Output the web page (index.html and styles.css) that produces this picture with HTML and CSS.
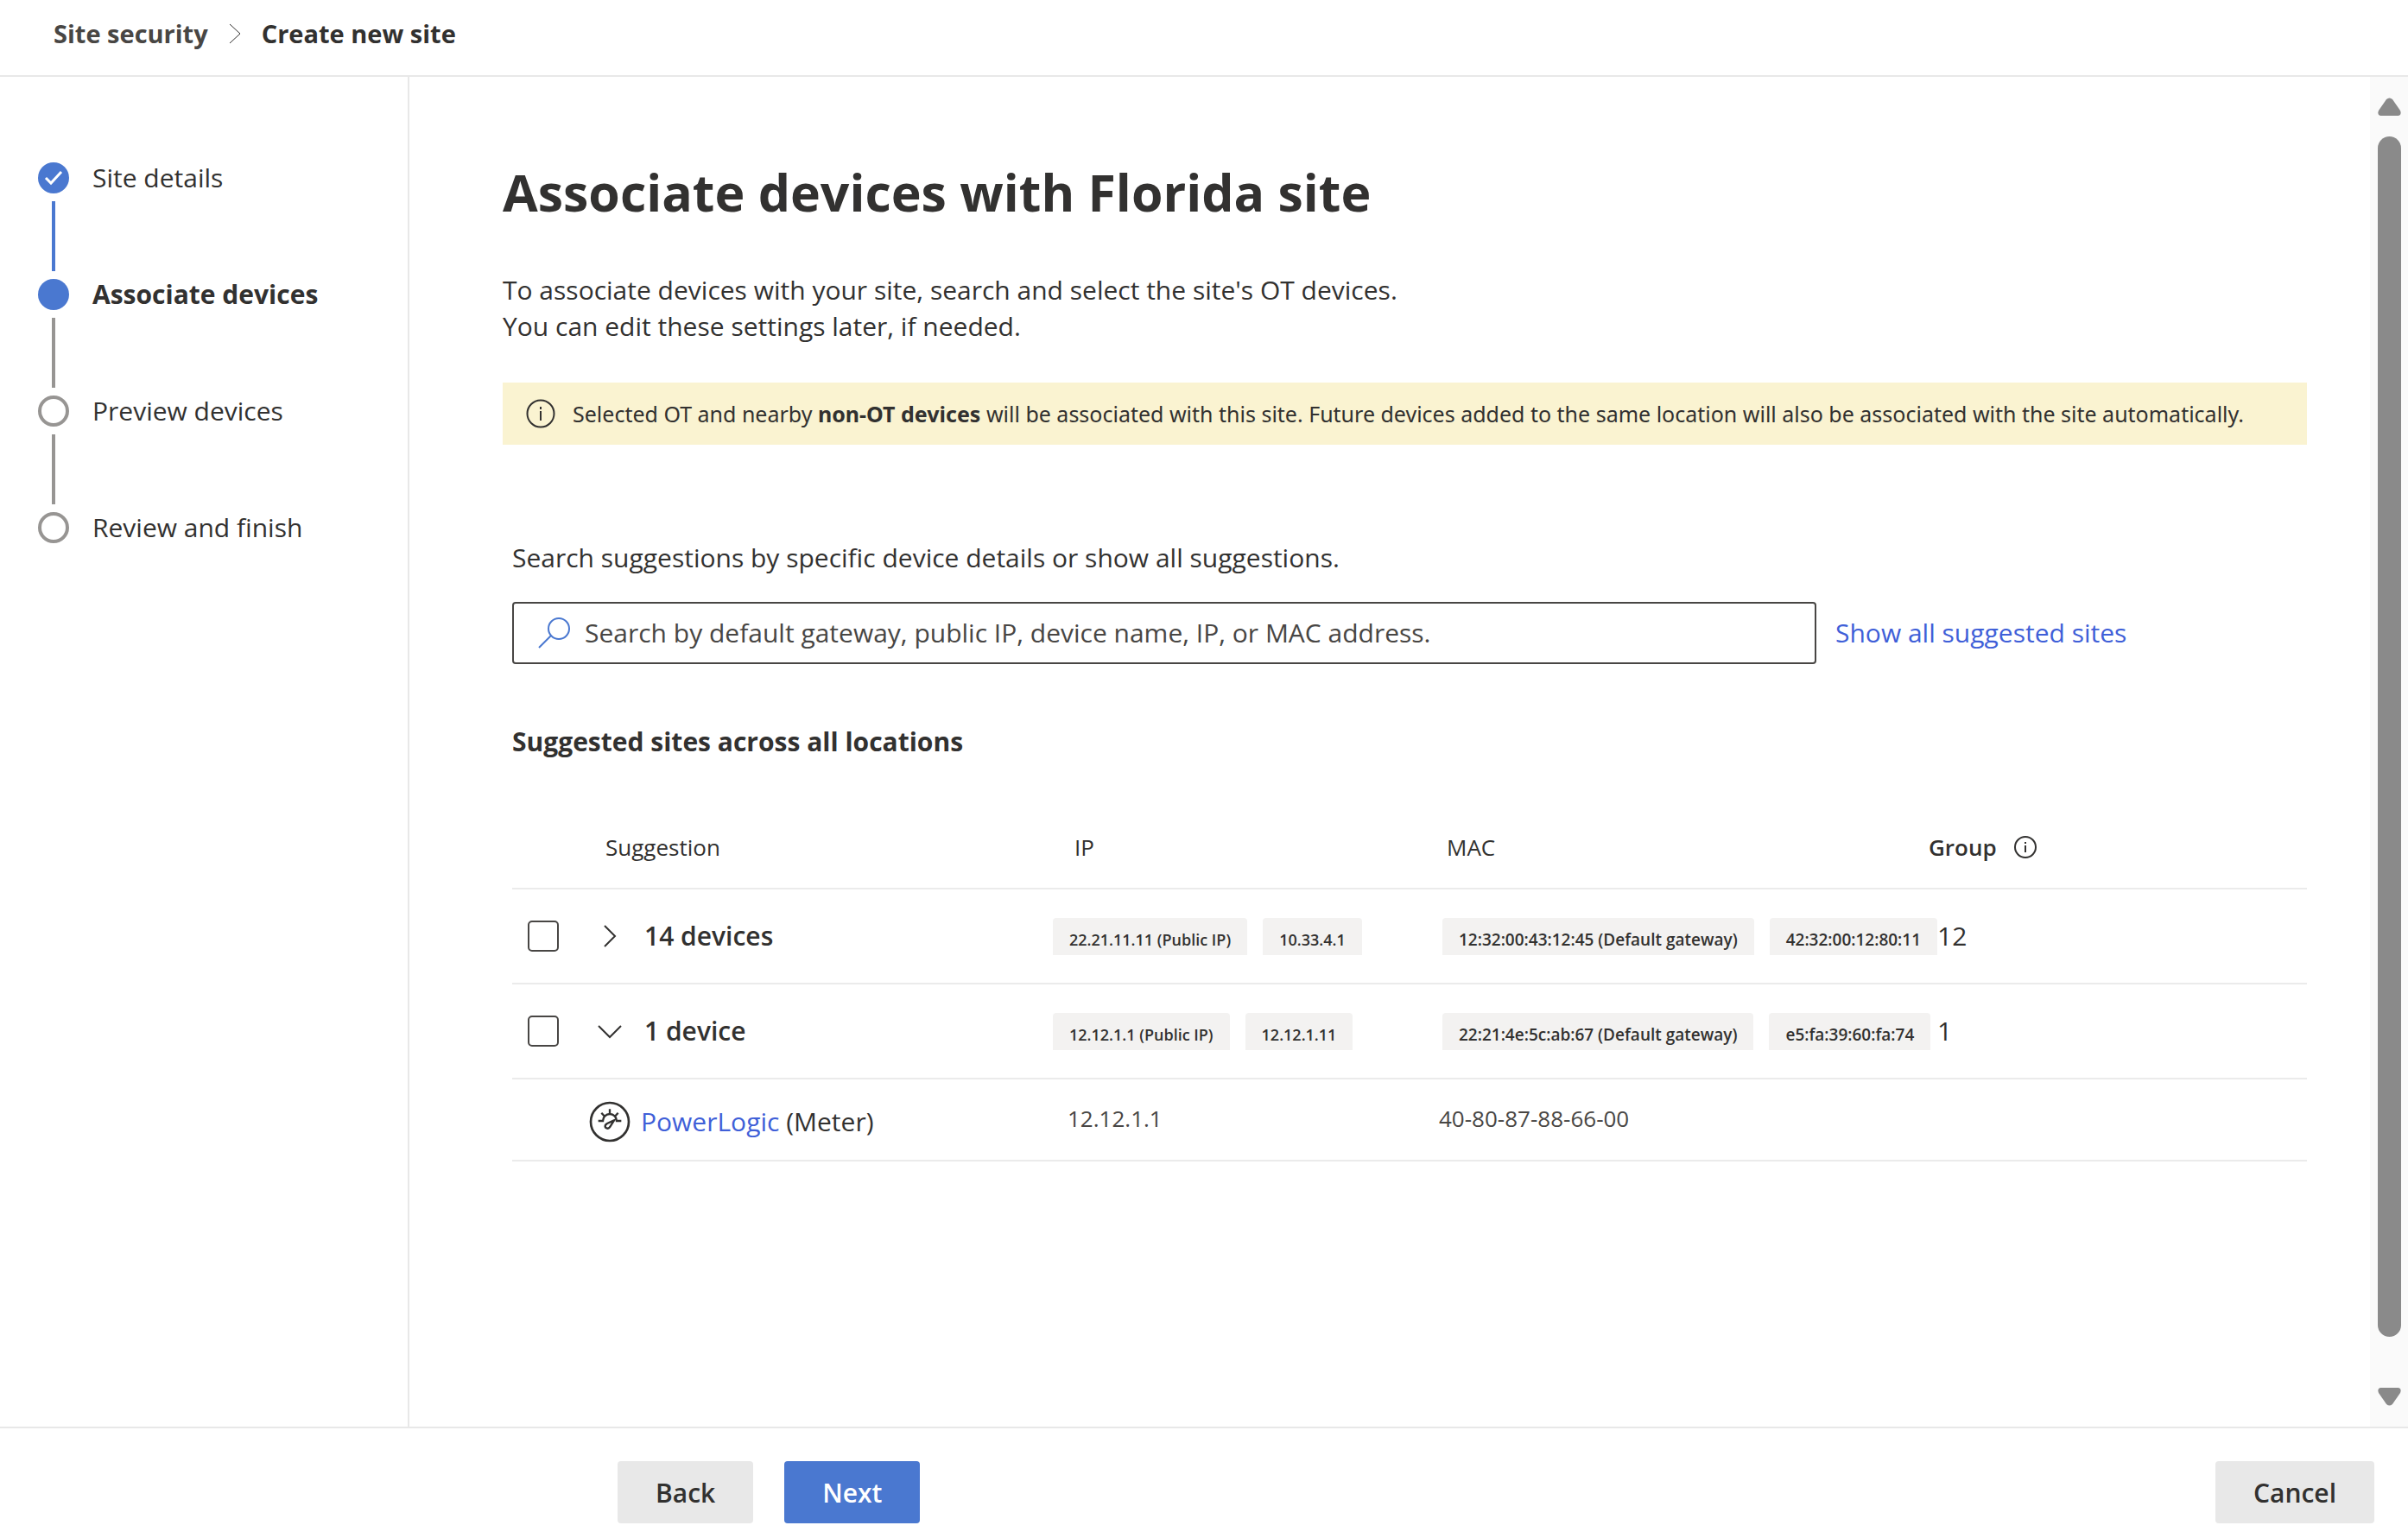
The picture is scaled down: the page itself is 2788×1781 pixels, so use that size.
FILE: index.html
```html
<!DOCTYPE html>
<html lang="en">
<head>
<meta charset="utf-8">
<meta name="viewport" content="width=device-width, initial-scale=1">
<title>Create new site</title>
<link rel="stylesheet" href="styles.css">
</head>
<body>
<div class="page">
  <header class="topbar">
    <nav class="breadcrumb" aria-label="Breadcrumb">
      <a class="crumb" href="#">Site security</a>
      <svg class="crumb-sep" viewBox="0 0 14 24" aria-hidden="true"><path d="M1 1l12 11L1 23"/></svg>
      <span class="crumb crumb-current" aria-current="page">Create new site</span>
    </nav>
  </header>

  <div class="body">
    <aside class="sidebar">
      <ol class="steps">
        <li class="step step-done">
          <span class="dot"><svg viewBox="0 0 36 36" aria-hidden="true"><path d="M9 18l6 6L27 11"/></svg></span>
          <span class="step-name">Site details</span>
        </li>
        <li class="step step-active" aria-current="step">
          <span class="dot"></span>
          <span class="step-name">Associate devices</span>
        </li>
        <li class="step">
          <span class="dot"></span>
          <span class="step-name">Preview devices</span>
        </li>
        <li class="step">
          <span class="dot"></span>
          <span class="step-name">Review and finish</span>
        </li>
      </ol>
    </aside>

    <main class="content">
      <h1 class="title">Associate devices with Florida site</h1>
      <p class="intro">To associate devices with your site, search and select the site's OT devices.<br>You can edit these settings later, if needed.</p>

      <div class="notice" role="note">
        <svg class="notice-icon" viewBox="0 0 34 34" aria-hidden="true"><circle cx="17" cy="17" r="15.5"/><path d="M17 14v11M17 9v3"/></svg>
        <p class="notice-text">Selected OT and nearby <strong>non-OT devices</strong> will be associated with this site. Future devices added to the same location will also be associated with the site automatically.</p>
      </div>

      <section class="suggestions">
        <label class="search-label" for="search">Search suggestions by specific device details or show all suggestions.</label>
        <div class="search-row">
          <div class="search-box">
            <svg class="search-icon" viewBox="0 0 38 36" aria-hidden="true"><circle cx="24" cy="13" r="12"/><path d="M15 21L1 35"/></svg>
            <input class="search-input" id="search" type="text" placeholder="Search by default gateway, public IP, device name, IP, or MAC address.">
          </div>
          <a class="link" href="#">Show all suggested sites</a>
        </div>

        <h2 class="subtitle">Suggested sites across all locations</h2>

        <table class="table">
          <colgroup>
            <col class="col-check"><col class="col-name"><col class="col-ip"><col class="col-mac"><col>
          </colgroup>
          <thead>
            <tr>
              <th></th>
              <th class="head-name" scope="col">Suggestion</th>
              <th class="head-ip" scope="col">IP</th>
              <th class="head-mac" scope="col">MAC</th>
              <th class="head-group" scope="col">
                <div class="group-label">Group
                  <svg class="group-icon" viewBox="0 0 26 26" aria-hidden="true"><circle cx="13" cy="13" r="12"/><path d="M13 11v8M13 7v2"/></svg>
                </div>
              </th>
            </tr>
          </thead>
          <tbody>
            <tr class="site-row">
              <td class="cell-check"><input class="check" type="checkbox" id="site-1"></td>
              <td>
                <div class="site">
                  <button class="toggle" type="button" aria-label="Expand 14 devices" aria-expanded="false"><svg class="chevron" viewBox="0 0 28 28" aria-hidden="true"><path d="M8 2l12 12L8 26"/></svg></button>
                  <label for="site-1">14 devices</label>
                </div>
              </td>
              <td><div class="chips chips-ip"><span class="chip">22.21.11.11 (Public IP)</span><span class="chip">10.33.4.1</span></div></td>
              <td><div class="chips chips-mac"><span class="chip">12:32:00:43:12:45 (Default gateway)</span><span class="chip">42:32:00:12:80:11</span></div></td>
              <td class="count">12</td>
            </tr>
            <tr class="site-row">
              <td class="cell-check"><input class="check" type="checkbox" id="site-2"></td>
              <td>
                <div class="site">
                  <button class="toggle" type="button" aria-label="Collapse 1 device" aria-expanded="true"><svg class="chevron" viewBox="0 0 28 28" aria-hidden="true"><path d="M1 8l13 13L27 8"/></svg></button>
                  <label for="site-2">1 device</label>
                </div>
              </td>
              <td><div class="chips chips-ip"><span class="chip">12.12.1.1 (Public IP)</span><span class="chip">12.12.1.11</span></div></td>
              <td><div class="chips chips-mac"><span class="chip">22:21:4e:5c:ab:67 (Default gateway)</span><span class="chip">e5:fa:39:60:fa:74</span></div></td>
              <td class="count">1</td>
            </tr>
            <tr class="device-row">
              <td></td>
              <td>
                <div class="device">
                  <svg class="meter" viewBox="38 43 144 144" aria-hidden="true"><circle cx="110" cy="115" r="66"/><path class="meter-dial" d="M70 112H86A24 24 0 0 1 134 112H150M110 71V87M81 84l9 10M139 84l-9 10"/><path class="meter-dial" d="M125 110L101 121Q91 127 95 135Q103 142 110 134Z"/></svg>
                  <span><a class="link" href="#">PowerLogic</a> (Meter)</span>
                </div>
              </td>
              <td class="device-ip">12.12.1.1</td>
              <td class="device-mac">40-80-87-88-66-00</td>
              <td></td>
            </tr>
          </tbody>
        </table>
      </section>
    </main>

    <div class="scrollbar" aria-hidden="true">
      <svg class="arrow" viewBox="0 0 27 21"><path d="M10 2Q13.500-1 17 2L26 15Q28 20 24 21H3Q-1 20 1 15Z"/></svg>
      <div class="thumb"></div>
      <svg class="arrow" viewBox="0 0 27 21"><path d="M10 19Q13.500 22 17 19L26 6Q28 1 24 0H3Q-1 1 1 6Z"/></svg>
    </div>
  </div>

  <footer class="footer">
    <button class="button" type="button">Back</button>
    <button class="button button-primary" type="button">Next</button>
    <button class="button button-cancel" type="button">Cancel</button>
  </footer>
</div>
</body>
</html>
```

FILE: styles.css
```css
* {
  box-sizing: border-box;
}

body {
  margin: 0;
  background: #fff;
  color: #323130;
  font-family: "Open Sans", "Noto Sans", sans-serif;
  font-size: 30px;
  line-height: 42px;
}

h1, h2, p, ol {
  margin: 0;
  padding: 0;
}

svg {
  display: block;
  flex: none;
  fill: none;
  stroke: currentColor;
}

button, input {
  font: inherit;
  color: inherit;
}

.page {
  display: flex;
  flex-direction: column;
  min-height: 100vh;
}

/* Top bar */

.topbar {
  padding: 18px 62px 27px;
  border-bottom: 2px solid #e8e8e8;
}

.breadcrumb {
  display: flex;
  align-items: center;
  gap: 24px;
}

.crumb {
  color: #484644;
  font-size: 29px;
  font-weight: 700;
  text-decoration: none;
}

.crumb-current {
  color: #323130;
}

.crumb-sep {
  width: 14px;
  height: 24px;
  stroke-width: 1;
}

/* Wizard steps */

.body {
  display: flex;
  flex: 1;
}

.sidebar {
  flex: none;
  width: 474px;
  padding: 99px 44px;
  border-right: 2px solid #e8e8e8;
}

.steps {
  list-style: none;
}

.step {
  display: grid;
  grid-template-columns: 36px 1fr;
  grid-template-rows: 36px auto;
  column-gap: 27px;
  align-items: center;
}

.step:not(:last-child)::after {
  content: "";
  width: 4px;
  height: 81px;
  margin: 9px 0;
  justify-self: center;
  background: #979593;
}

.step-done:not(:last-child)::after {
  background: #4a78d0;
}

.dot {
  width: 36px;
  height: 36px;
  border: 4px solid #979593;
  border-radius: 50%;
}

.step-done .dot,
.step-active .dot {
  border: 0;
  background: #4a78d0;
  color: #fff;
}

.dot svg {
  stroke-width: 3;
}

.step-active .step-name {
  font-weight: 700;
}

/* Main content */

.content {
  flex: 1;
  min-width: 0;
  padding: 91px 73px 90px 108px;
}

.title {
  font-size: 59px;
  line-height: 84px;
  font-weight: 700;
}

.intro {
  margin-top: 51px;
}

.notice {
  display: flex;
  align-items: center;
  gap: 20px;
  min-height: 72px;
  margin-top: 44px;
  padding: 0 27px;
  background: #faf3d1;
}

.notice-icon {
  width: 34px;
  height: 34px;
  stroke-width: 2;
}

.notice-text {
  font-family: "Noto Sans", "Open Sans", sans-serif;
  font-size: 25px;
}

.suggestions {
  padding: 110px 0 0 11px;
}

.search-label {
  display: block;
}

.search-row {
  display: flex;
  align-items: center;
  gap: 22px;
  margin-top: 30px;
}

.search-box {
  display: flex;
  align-items: center;
  gap: 16px;
  flex: 0 1 1510px;
  height: 72px;
  padding: 0 28px;
  border: 2px solid #484644;
  border-radius: 4px;
}

.search-icon {
  width: 38px;
  height: 36px;
  color: #4a78d0;
  stroke-width: 2;
}

.search-input {
  flex: 1;
  min-width: 0;
  padding: 0;
  border: 0;
  outline: 0;
  background: none;
}

.search-input::placeholder {
  color: #484644;
  opacity: 1;
}

.link {
  color: #3f5fd8;
  text-decoration: none;
}

.subtitle {
  margin-top: 69px;
  font-size: 30px;
  font-weight: 700;
}

/* Suggestions table */

.table {
  width: 100%;
  margin-top: 54px;
  border-collapse: collapse;
  table-layout: fixed;
}

.col-check { width: 92px; }
.col-name { width: 534px; }
.col-ip { width: 447px; }
.col-mac { width: 577px; }

th, td {
  padding: 0;
  border-bottom: 2px solid #ebebeb;
  text-align: left;
  vertical-align: middle;
  white-space: nowrap;
}

th {
  height: 95px;
  font-size: 26px;
  font-weight: 400;
}

.head-name { padding-left: 16px; }
.head-ip { padding-left: 25px; }
.head-mac { padding-left: 9px; }

.head-group {
  font-weight: 600;
}

.group-label {
  display: flex;
  align-items: center;
  gap: 20px;
  margin-left: -10px;
}

.group-icon {
  width: 26px;
  height: 26px;
  stroke-width: 2;
}

.site-row td {
  height: 110px;
}

.cell-check {
  padding-left: 18px;
}

.check {
  display: block;
  width: 36px;
  height: 36px;
  margin: 0;
  border: 2px solid #484644;
  border-radius: 5px;
  background: #fff;
  appearance: none;
}

.site {
  display: flex;
  align-items: center;
  gap: 26px;
  padding-left: 7px;
  font-weight: 600;
}

.toggle {
  padding: 0;
  border: 0;
  background: none;
}

.chevron {
  width: 28px;
  height: 28px;
  stroke-width: 2;
}

.chips {
  display: flex;
  gap: 18px;
  font-size: 19px;
}

.chips-ip { font-size: 18px; }
.chips-mac { padding-left: 4px; }

.chip {
  padding: 8px 19px 1px;
  border-radius: 4px 4px 0 0;
  background: #f3f2f1;
  line-height: 34px;
  font-weight: 600;
}

.device-row td {
  height: 95px;
}

.device {
  display: flex;
  align-items: center;
  gap: 12px;
  padding-top: 4px;
}

.meter {
  width: 48px;
  height: 48px;
  margin-left: -3px;
  stroke-width: 8;
}

.meter-dial {
  stroke-width: 7;
}

.device-row .device-ip,
.device-row .device-mac {
  padding-bottom: 4px;
  color: #484644;
  font-size: 26px;
}

.device-row .device-ip { padding-left: 17px; }

/* Scroll bar */

.scrollbar {
  display: flex;
  flex: none;
  flex-direction: column;
  align-items: center;
  gap: 24px;
  width: 44px;
  padding: 24px 0;
  background: #fafafa;
  color: #8a8a8a;
}

.arrow {
  width: 27px;
  height: 21px;
  fill: currentColor;
  stroke: none;
}

.thumb {
  flex: 1;
  width: 27px;
  margin-bottom: 35px;
  border-radius: 14px;
  background: #8a8a8a;
}

/* Footer */

.footer {
  display: flex;
  gap: 36px;
  padding: 38px 39px 17px 715px;
  border-top: 2px solid #e8e8e8;
}

.button {
  min-width: 157px;
  height: 72px;
  padding: 2px 44px 0;
  border: 0;
  border-radius: 4px;
  background: #e8e8e8;
  font-weight: 600;
}

.button-primary {
  background: #4a78d0;
  color: #fff;
}

.button-cancel {
  margin-left: auto;
}
```
